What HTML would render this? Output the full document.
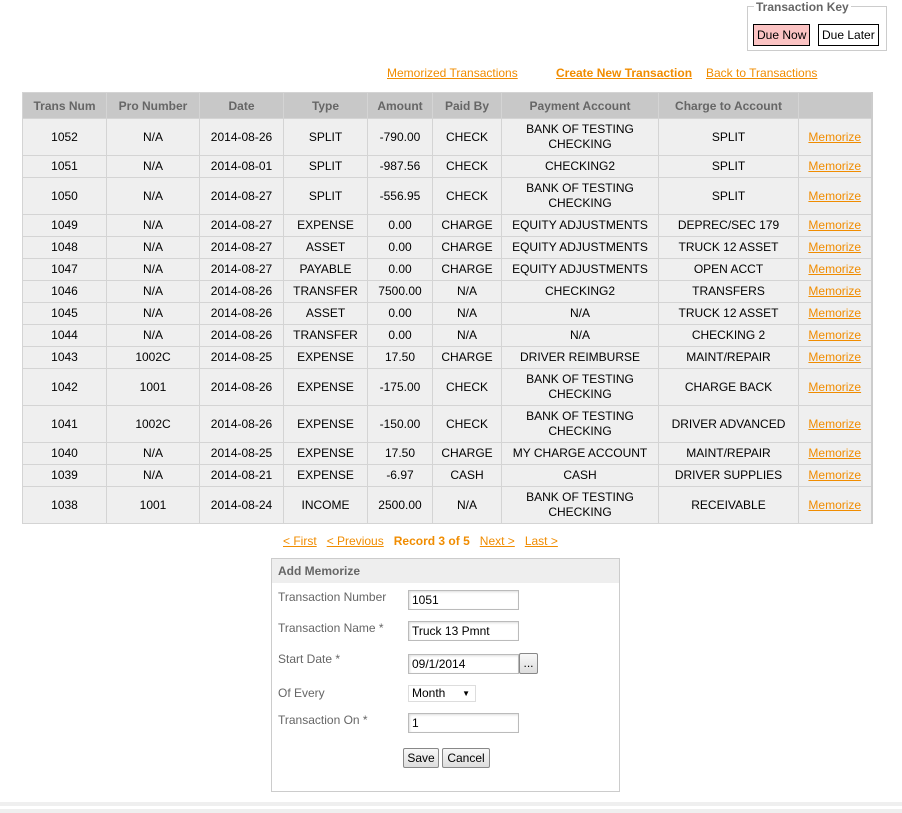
<!DOCTYPE html>
<html><head><meta charset="utf-8"><style>
body{margin:0;width:902px;height:813px;position:relative;background:#fff;font-family:"Liberation Sans",Arial,sans-serif;font-size:12px;color:#000;overflow:hidden}
a{color:#f08c00;text-decoration:underline}
.key{position:absolute;left:747px;top:6px;width:140px;height:45px;border:1px solid #ccc;box-sizing:border-box}
.key .t{position:absolute;left:6px;top:-7px;background:#fff;padding:0 2px;color:#666;font-weight:bold;font-size:12px}
.key .b{position:absolute;top:17px;height:22px;border:1px solid #000;box-sizing:border-box;line-height:20px;padding:0 3px;font-size:12px}
.links{position:absolute;top:66px;font-size:12px}
table{position:absolute;left:22px;top:92px;border-collapse:collapse;table-layout:fixed;width:849px;border-right:2px solid #ccc}
th{background:#c8c8c8;color:#666;font-weight:bold;height:25px;padding:0;border:1px solid #d4d4d4;text-align:center}
td{background:#efefef;border:1px solid #d4d4d4;text-align:center;padding:0;line-height:15px}
tr.s td{height:21px}
tr.d td{height:36px}
.pg{position:absolute;top:534px;left:283px;font-size:12px}
.pg b{color:#f08c00}
.box{position:absolute;left:271px;top:558px;width:349px;height:234px;border:1px solid #ccc;box-sizing:border-box}
.box .h{background:#eee;height:24px;line-height:25px;padding-left:6px;font-weight:bold;color:#666}
.lbl{position:absolute;left:6px;color:#666}
.inp{position:absolute;left:136px;width:111px;height:20px;border:1px solid #bbb;box-sizing:border-box;line-height:18px;padding-left:3px;font-size:12px;box-shadow:inset 1px 1px 2px #ddd}
.btn{position:absolute;border:1px solid #888;border-radius:2px;background:linear-gradient(#f8f8f8,#ddd);height:20px;box-sizing:border-box;line-height:18px;text-align:center;font-size:12px}
.bar{position:absolute;left:0;width:902px;height:4px;background:#efefef}
</style></head><body>
<div class="key"><span class="t">Transaction Key</span>
<div class="b" style="left:5px;background:#fbc3c3">Due Now</div>
<div class="b" style="left:70px">Due Later</div></div>
<div class="links" style="left:387px"><a>Memorized Transactions</a></div>
<div class="links" style="left:556px"><a style="font-weight:bold">Create New Transaction</a></div>
<div class="links" style="left:706px"><a>Back to Transactions</a></div>
<table>
<colgroup><col style="width:84px"><col style="width:93px"><col style="width:84px"><col style="width:84px"><col style="width:65px"><col style="width:69px"><col style="width:157px"><col style="width:140px"><col style="width:73px"></colgroup>
<tr><th>Trans Num</th><th>Pro Number</th><th>Date</th><th>Type</th><th>Amount</th><th>Paid By</th><th>Payment Account</th><th>Charge to Account</th><th></th></tr>
<tr class="d"><td>1052</td><td>N/A</td><td>2014-08-26</td><td>SPLIT</td><td>-790.00</td><td>CHECK</td><td>BANK OF TESTING<br>CHECKING</td><td>SPLIT</td><td><a>Memorize</a></td></tr>
<tr class="s"><td>1051</td><td>N/A</td><td>2014-08-01</td><td>SPLIT</td><td>-987.56</td><td>CHECK</td><td>CHECKING2</td><td>SPLIT</td><td><a>Memorize</a></td></tr>
<tr class="d"><td>1050</td><td>N/A</td><td>2014-08-27</td><td>SPLIT</td><td>-556.95</td><td>CHECK</td><td>BANK OF TESTING<br>CHECKING</td><td>SPLIT</td><td><a>Memorize</a></td></tr>
<tr class="s"><td>1049</td><td>N/A</td><td>2014-08-27</td><td>EXPENSE</td><td>0.00</td><td>CHARGE</td><td>EQUITY ADJUSTMENTS</td><td>DEPREC/SEC 179</td><td><a>Memorize</a></td></tr>
<tr class="s"><td>1048</td><td>N/A</td><td>2014-08-27</td><td>ASSET</td><td>0.00</td><td>CHARGE</td><td>EQUITY ADJUSTMENTS</td><td>TRUCK 12 ASSET</td><td><a>Memorize</a></td></tr>
<tr class="s"><td>1047</td><td>N/A</td><td>2014-08-27</td><td>PAYABLE</td><td>0.00</td><td>CHARGE</td><td>EQUITY ADJUSTMENTS</td><td>OPEN ACCT</td><td><a>Memorize</a></td></tr>
<tr class="s"><td>1046</td><td>N/A</td><td>2014-08-26</td><td>TRANSFER</td><td>7500.00</td><td>N/A</td><td>CHECKING2</td><td>TRANSFERS</td><td><a>Memorize</a></td></tr>
<tr class="s"><td>1045</td><td>N/A</td><td>2014-08-26</td><td>ASSET</td><td>0.00</td><td>N/A</td><td>N/A</td><td>TRUCK 12 ASSET</td><td><a>Memorize</a></td></tr>
<tr class="s"><td>1044</td><td>N/A</td><td>2014-08-26</td><td>TRANSFER</td><td>0.00</td><td>N/A</td><td>N/A</td><td>CHECKING 2</td><td><a>Memorize</a></td></tr>
<tr class="s"><td>1043</td><td>1002C</td><td>2014-08-25</td><td>EXPENSE</td><td>17.50</td><td>CHARGE</td><td>DRIVER REIMBURSE</td><td>MAINT/REPAIR</td><td><a>Memorize</a></td></tr>
<tr class="d"><td>1042</td><td>1001</td><td>2014-08-26</td><td>EXPENSE</td><td>-175.00</td><td>CHECK</td><td>BANK OF TESTING<br>CHECKING</td><td>CHARGE BACK</td><td><a>Memorize</a></td></tr>
<tr class="d"><td>1041</td><td>1002C</td><td>2014-08-26</td><td>EXPENSE</td><td>-150.00</td><td>CHECK</td><td>BANK OF TESTING<br>CHECKING</td><td>DRIVER ADVANCED</td><td><a>Memorize</a></td></tr>
<tr class="s"><td>1040</td><td>N/A</td><td>2014-08-25</td><td>EXPENSE</td><td>17.50</td><td>CHARGE</td><td>MY CHARGE ACCOUNT</td><td>MAINT/REPAIR</td><td><a>Memorize</a></td></tr>
<tr class="s"><td>1039</td><td>N/A</td><td>2014-08-21</td><td>EXPENSE</td><td>-6.97</td><td>CASH</td><td>CASH</td><td>DRIVER SUPPLIES</td><td><a>Memorize</a></td></tr>
<tr class="d"><td>1038</td><td>1001</td><td>2014-08-24</td><td>INCOME</td><td>2500.00</td><td>N/A</td><td>BANK OF TESTING<br>CHECKING</td><td>RECEIVABLE</td><td><a>Memorize</a></td></tr>
</table>
<div class="pg"><a>&lt; First</a>&nbsp;&nbsp; <a>&lt; Previous</a>&nbsp;&nbsp; <b>Record 3 of 5</b>&nbsp;&nbsp; <a>Next &gt;</a>&nbsp;&nbsp; <a>Last &gt;</a></div>
<div class="box"><div class="h">Add Memorize</div>
<div class="lbl" style="top:31px">Transaction Number</div><div class="inp" style="top:31px">1051</div>
<div class="lbl" style="top:62px">Transaction Name *</div><div class="inp" style="top:62px">Truck 13 Pmnt</div>
<div class="lbl" style="top:93px">Start Date *</div><div class="inp" style="top:95px">09/1/2014</div>
<div class="btn" style="left:247px;top:94px;width:19px;height:21px">...</div>
<div class="lbl" style="top:127px">Of Every</div>
<div class="inp" style="top:126px;width:68px;height:17px;line-height:15px;border-color:#ddd;box-shadow:none">Month <span style="position:absolute;right:5px;top:0;font-size:8px">&#9660;</span></div>
<div class="lbl" style="top:154px">Transaction On *</div><div class="inp" style="top:154px">1</div>
<div class="btn" style="left:131px;top:189px;width:36px">Save</div>
<div class="btn" style="left:170px;top:189px;width:48px">Cancel</div>
</div>
<div class="bar" style="top:802px"></div>
<div class="bar" style="top:809px"></div>
</body></html>
